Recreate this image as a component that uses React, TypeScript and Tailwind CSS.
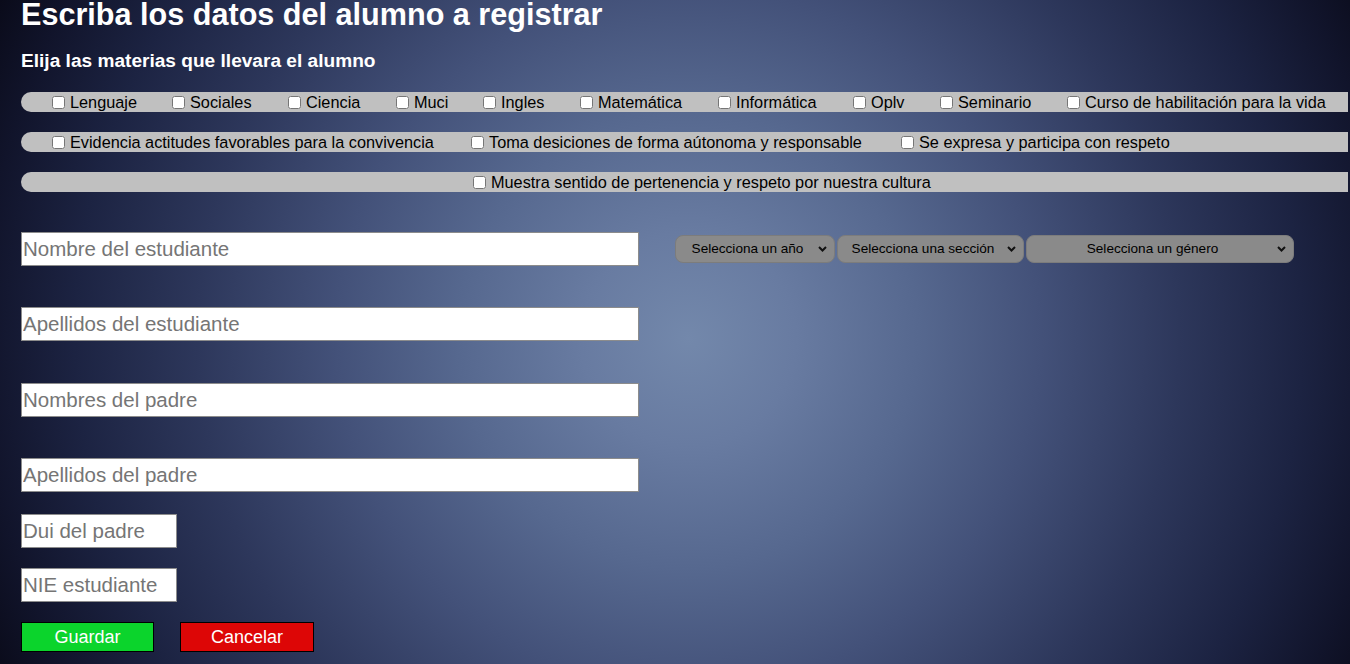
import React from "react";

const row1: { label: string; w?: string }[] = [
  { label: "Lenguaje", w: "w-[120px]" },
  { label: "Sociales", w: "w-[116px]" },
  { label: "Ciencia", w: "w-[108px]" },
  { label: "Muci", w: "w-[87px]" },
  { label: "Ingles", w: "w-[97px]" },
  { label: "Matemática", w: "w-[138px]" },
  { label: "Informática", w: "w-[135px]" },
  { label: "Oplv", w: "w-[87px]" },
  { label: "Seminario", w: "w-[127px]" },
  { label: "Curso de habilitación para la vida" },
];

const row2: { label: string; w?: string }[] = [
  { label: "Evidencia actitudes favorables para la convivencia", w: "w-[419px]" },
  { label: "Toma desiciones de forma aútonoma y responsable", w: "w-[430px]" },
  { label: "Se expresa y participa con respeto" },
];

function Check({ label, w }: { label: string; w?: string }) {
  return (
    <label className={`flex items-center gap-[5px] shrink-0 ${w ?? ""}`}>
      <input type="checkbox" className="w-[13px] h-[13px] m-0" />
      <span className="whitespace-nowrap">{label}</span>
    </label>
  );
}

function Chevron() {
  return (
    <svg width="9" height="6" viewBox="0 0 9 6" className="absolute right-[8px] top-1/2 -translate-y-1/2 pointer-events-none">
      <path d="M1 1 L4.5 4.5 L8 1" fill="none" stroke="#111" strokeWidth="2" />
    </svg>
  );
}

function Select({ label, w }: { label: string; w: string }) {
  return (
    <div className={`relative ${w} h-[28px]`}>
      <select className="appearance-none w-full h-full bg-[#8a8a8a] border border-[#7c7c7c] rounded-[8px] text-[13.6px] text-black text-center pl-[2px] pr-[17px] outline-none">
        <option>{label}</option>
      </select>
      <Chevron />
    </div>
  );
}

function TextInput({ ph, w, className = "" }: { ph: string; w: string; className?: string }) {
  return (
    <input
      type="text"
      placeholder={ph}
      className={`${w} h-[34px] bg-white border border-[#8c8c8c] px-[1px] text-[20.5px] text-black placeholder:text-[#757575] outline-none block ${className}`}
    />
  );
}

export default function App() {
  return (
    <div className="w-full h-[664px] overflow-hidden font-['Liberation_Sans',Arial,sans-serif] bg-[radial-gradient(circle_at_51%_51%,#7388ab_0%,#687ba1_14%,#56688f_30%,#435179_46%,#2d375b_64%,#1c2342_80%,#11142b_92%,#0a0b1a_100%)]">
      <div className="pl-[21px]">
        <h1 className="text-[30.6px] leading-[28px] font-bold text-white">Escriba los datos del alumno a registrar</h1>
        <h3 className="mt-[23px] text-[19.1px] leading-[20px] font-bold text-white">Elija las materias que llevara el alumno</h3>

        <div className="mt-[21px] flex flex-col gap-[20px] text-[16.3px] text-black">
          <div className="h-[20px] w-[1327px] bg-[#c0c0c0] rounded-l-full flex items-center pl-[31px]">
            {row1.map((r) => (
              <Check key={r.label} {...r} />
            ))}
          </div>
          <div className="h-[20px] w-[1327px] bg-[#c0c0c0] rounded-l-full flex items-center pl-[31px]">
            {row2.map((r) => (
              <Check key={r.label} {...r} />
            ))}
          </div>
          <div className="h-[20px] w-[1327px] bg-[#c0c0c0] rounded-l-full flex items-center pl-[452px]">
            <Check label="Muestra sentido de pertenencia y respeto por nuestra cultura" />
          </div>
        </div>

        <div className="mt-[40px] flex items-center">
          <TextInput ph="Nombre del estudiante" w="w-[618px]" />
          <div className="ml-[36px] flex items-center gap-[2px]">
            <Select label="Selecciona un año" w="w-[160px]" />
            <Select label="Selecciona una sección" w="w-[187px]" />
            <Select label="Selecciona un género" w="w-[268px]" />
          </div>
        </div>
        <TextInput ph="Apellidos del estudiante" w="w-[618px]" className="mt-[41px]" />
        <TextInput ph="Nombres del padre" w="w-[618px]" className="mt-[42px]" />
        <TextInput ph="Apellidos del padre" w="w-[618px]" className="mt-[41px]" />
        <TextInput ph="Dui del padre" w="w-[156px]" className="mt-[22px]" />
        <TextInput ph="NIE estudiante" w="w-[156px]" className="mt-[20px]" />

        <div className="mt-[20px] flex gap-[26px]">
          <button className="w-[133px] h-[30px] bg-[#0bd42c] border border-black text-white text-[18px]">Guardar</button>
          <button className="w-[134px] h-[30px] bg-[#dd0606] border border-black text-white text-[18px]">Cancelar</button>
        </div>
      </div>
    </div>
  );
}
